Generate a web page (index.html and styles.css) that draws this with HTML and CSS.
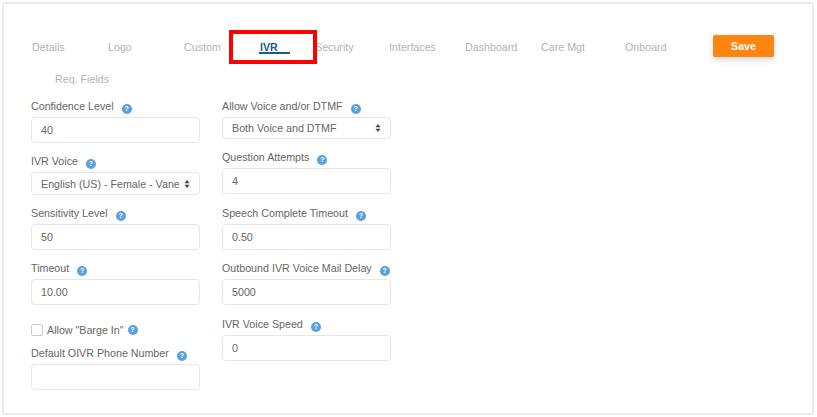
FILE: index.html
```html
<!DOCTYPE html>
<html lang="en">

<head>
    <meta charset="UTF-8">
    <title>IVR settings</title>
    <link rel="stylesheet" href="styles.css">
</head>

<body>
    <div class="card">
        <div class="tabs">
            <a class="tab tab-details">Details</a>
            <a class="tab tab-logo">Logo</a>
            <a class="tab tab-custom">Custom</a>
            <a class="tab tab-ivr">IVR</a>
            <a class="tab tab-security">Security</a>
            <a class="tab tab-interfaces">Interfaces</a>
            <a class="tab tab-dashboard">Dashboard</a>
            <a class="tab tab-care">Care Mgt</a>
            <a class="tab tab-onboard">Onboard</a>
            <button class="save" type="button">Save</button>
            <a class="tab tab-req">Req. Fields</a>
            <div class="highlight"></div>
        </div>

        <form class="form">
            <div class="column">
                <div class="field">
                    <label class="label">Confidence Level <span class="help">?</span></label>
                    <input class="input" type="text" value="40">
                </div>
                <div class="field">
                    <label class="label">IVR Voice <span class="help">?</span></label>
                    <div class="select-wrap">
                        <select class="select">
                            <option>English (US) - Female - Vanessa</option>
                        </select>
                        <svg class="arrows" width="6" height="8" viewBox="0 0 6 8">
                            <path d="M3 0 L5.5 3.2 H0.5 Z M3 8 L0.5 4.8 H5.5 Z" fill="#444" />
                        </svg>
                    </div>
                </div>
                <div class="field">
                    <label class="label">Sensitivity Level <span class="help">?</span></label>
                    <input class="input" type="text" value="50">
                </div>
                <div class="field">
                    <label class="label">Timeout <span class="help">?</span></label>
                    <input class="input" type="text" value="10.00">
                </div>
                <div class="check-row">
                    <input class="check" type="checkbox">
                    <span class="check-label">Allow "Barge In"</span>
                    <span class="help">?</span>
                </div>
                <div class="field">
                    <label class="label">Default OIVR Phone Number <span class="help">?</span></label>
                    <input class="input" type="text">
                </div>
            </div>

            <div class="column">
                <div class="field">
                    <label class="label">Allow Voice and/or DTMF <span class="help">?</span></label>
                    <div class="select-wrap">
                        <select class="select select-dtmf">
                            <option>Both Voice and DTMF</option>
                        </select>
                        <svg class="arrows arrows-dtmf" width="6" height="8" viewBox="0 0 6 8">
                            <path d="M3 0 L5.5 3.2 H0.5 Z M3 8 L0.5 4.8 H5.5 Z" fill="#444" />
                        </svg>
                    </div>
                </div>
                <div class="field field-wide">
                    <label class="label">Question Attempts <span class="help">?</span></label>
                    <input class="input" type="text" value="4">
                </div>
                <div class="field">
                    <label class="label">Speech Complete Timeout <span class="help">?</span></label>
                    <input class="input" type="text" value="0.50">
                </div>
                <div class="field field-wide">
                    <label class="label">Outbound IVR Voice Mail Delay <span class="help">?</span></label>
                    <input class="input" type="text" value="5000">
                </div>
                <div class="field">
                    <label class="label">IVR Voice Speed <span class="help">?</span></label>
                    <input class="input" type="text" value="0">
                </div>
            </div>
        </form>
    </div>
</body>

</html>
```

FILE: styles.css
```css
html,
body {
    margin: 0;
    padding: 0;
}

body {
    width: 817px;
    height: 417px;
    box-sizing: border-box;
    padding: 2px 3px 2px 2px;
    background-color: #fff;
    font-family: "Liberation Sans", Arial, sans-serif;
    font-size: 10.7px;
    color: #666;
    overflow: hidden;
}

.card {
    height: 413px;
    box-sizing: border-box;
    padding: 31px 0 0 27px;
    background-color: #fff;
    border: 2px solid #e9eaf0;
    border-radius: 3px;
}

.tabs {
    position: relative;
    display: flex;
    flex-wrap: wrap;
    align-items: flex-start;
    align-content: flex-start;
    height: 66px;
}

.tab {
    height: 22px;
    line-height: 24px;
    color: #b3b3b3;
    box-sizing: border-box;
    padding-left: 1px;
}

.tab-details,
.tab-logo,
.tab-custom,
.tab-interfaces,
.tab-dashboard {
    width: 76px;
}

.tab-ivr {
    width: 31px;
    height: 19px;
    margin-right: 24px;
    color: #1d5a85;
    font-weight: bold;
    border-bottom: 2px solid #1d5a85;
}

.tab-security {
    width: 74px;
}

.tab-care {
    width: 84px;
}

.tab-onboard {
    width: 89px;
}

.tab-req {
    width: 80px;
    margin-top: 10px;
    margin-left: 23px;
}

.save {
    width: 61px;
    height: 22px;
    padding: 0;
    border: none;
    border-radius: 2px;
    background-color: #ff8412;
    color: #fff;
    font-family: inherit;
    font-size: 10.7px;
    font-weight: bold;
    box-shadow: 0 3px 6px rgba(0, 0, 0, 0.16);
}

.highlight {
    position: absolute;
    left: 198px;
    top: -5px;
    width: 88px;
    height: 34px;
    box-sizing: border-box;
    border: 4px solid #f00;
}

.form {
    display: flex;
    gap: 22px;
}

.column {
    width: 169px;
}

.field {
    margin-bottom: 13px;
}

.field-wide {
    margin-bottom: 14px;
}

.label {
    display: block;
    height: 16px;
    line-height: 11px;
    color: #666;
    white-space: nowrap;
}

.help {
    display: inline-block;
    width: 10px;
    height: 10px;
    margin-left: 5px;
    border-radius: 50%;
    background-color: #5b9fdc;
    color: #fff;
    font-size: 7px;
    font-weight: bold;
    line-height: 10px;
    text-align: center;
    vertical-align: -1px;
}

.input,
.select {
    display: block;
    width: 169px;
    box-sizing: border-box;
    border: 1px solid #e6e6e6;
    border-radius: 4px;
    background-color: #fff;
    color: #666;
    font-family: inherit;
    font-size: 10.7px;
    padding: 0 9px;
    outline: none;
}

.input {
    height: 26px;
}

.select {
    height: 23px;
    appearance: none;
    -webkit-appearance: none;
    padding-right: 20px;
}

.select-dtmf {
    height: 22px;
}

.select-wrap {
    position: relative;
    width: 169px;
}

.arrows {
    position: absolute;
    right: 10px;
    top: 8px;
}

.arrows-dtmf {
    top: 7px;
}

.check-row {
    display: flex;
    align-items: center;
    height: 14px;
    margin: 18px 0 11px;
}

.check {
    appearance: none;
    -webkit-appearance: none;
    width: 12px;
    height: 12px;
    margin: 0 4px 0 0;
    border: 1px solid #ccc;
    border-radius: 2px;
    background-color: #fff;
}

.check-row .help {
    margin-left: 4px;
}
```
